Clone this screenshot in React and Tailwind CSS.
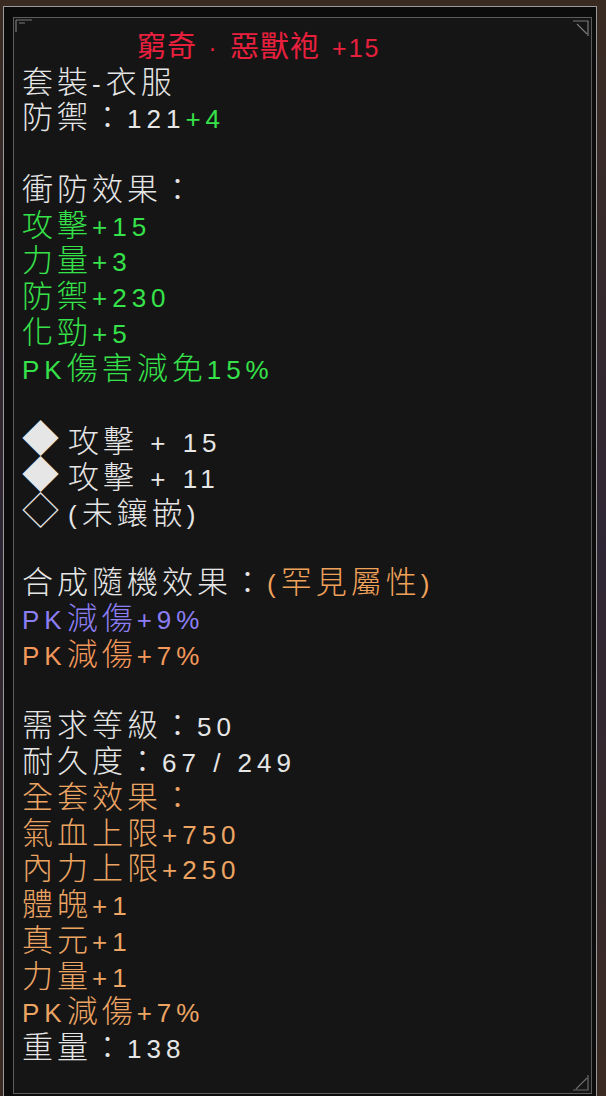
import React from "react";

const WHITE = "text-[#e6e6e6]";
const GREEN = "text-[#36e24a]";
const ORANGE = "text-[#eca463]";
const ORANGE2 = "text-[#f3975a]";
const PURPLE = "text-[#8c7ef4]";

const BODY_LATIN = "font-['Liberation_Sans',sans-serif] text-[26px] tracking-[5px]";
const TITLE_LATIN = "font-['Liberation_Sans',sans-serif] text-[25px] tracking-[2px]";

// ASCII runs get a smaller latin font, CJK stays in Noto
function Txt({ text, latin = BODY_LATIN }) {
  const parts = text.split(/([\u0000-\u00ff]+)/).filter(Boolean);
  return parts.map((p, i) =>
    /^[\u0000-\u00ff]+$/.test(p) ? (
      <span key={i} className={latin}>
        {p}
      </span>
    ) : (
      <span key={i}>{p}</span>
    )
  );
}

function Line({ children, className = WHITE }) {
  return (
    <div className={`h-[35.78px] leading-[35.78px] whitespace-nowrap ${className}`}>
      {children}
    </div>
  );
}

function Blank() {
  return <div className="h-[35.78px]" />;
}

function Gem({ filled, text }) {
  return (
    <Line>
      <span className="inline-block w-[46px] text-[37px] leading-[35.78px]">{filled ? "◆" : "◇"}</span>
      <Txt text={text} />
    </Line>
  );
}

export default function App() {
  return (
    <div className="w-[606px] h-[1096px] flex pt-[6px] pl-[3px] pr-[9px] bg-gradient-to-b from-[#3a2b22] via-[#2e2634] to-[#3b2a22]">
      <div className="flex-1 flex border border-b-0 border-[#9a9a9a] bg-[#0c0c0c] pl-[9px] pt-[10px] pr-[4px] pb-[2px]">
        <div className="relative flex-1 border border-[#5c5c5c] bg-[#151515] pl-[8px] font-['Noto_Sans_CJK_TC',sans-serif] font-light text-[31px] tracking-[4px]">
          {/* corner ornaments */}
          <svg className="absolute left-[1px] top-[1px]" width="18" height="14" viewBox="0 0 18 14">
            <path d="M1 1 H17 M1 1 V13 M4 4 H10" stroke="#7a7a7a" strokeWidth="1.2" fill="none" />
          </svg>
          <svg className="absolute right-[1px] top-[1px]" width="18" height="18" viewBox="0 0 18 18">
            <path d="M1 2 H16 V17 M5 5 L15 15" stroke="#7a7a7a" strokeWidth="1.2" fill="none" />
          </svg>
          <svg className="absolute right-[1px] bottom-[1px]" width="18" height="18" viewBox="0 0 18 18">
            <path d="M16 1 V16 H1 M15 4 L4 15" stroke="#6a6a6a" strokeWidth="1.2" fill="none" />
          </svg>

          <div className="mt-[10px] h-[33.5px] leading-[33.5px] pl-[115px] text-[29px] tracking-[1px] text-[#e8203e] font-normal whitespace-nowrap">
            <span>窮奇</span>
            <span className={`inline-block w-[33px] text-center ${TITLE_LATIN}`}>·</span>
            <span>惡獸袍</span>
            <span className={`ml-[12px] ${TITLE_LATIN}`}>+15</span>
          </div>

          <Line><Txt text="套裝-衣服" /></Line>
          <Line>
            <Txt text="防禦：121" />
            <span className={GREEN}><Txt text="+4" /></span>
          </Line>
          <Blank />
          <Line><Txt text="衝防效果：" /></Line>
          <Line className={GREEN}><Txt text="攻擊+15" /></Line>
          <Line className={GREEN}><Txt text="力量+3" /></Line>
          <Line className={GREEN}><Txt text="防禦+230" /></Line>
          <Line className={GREEN}><Txt text="化勁+5" /></Line>
          <Line className={GREEN}><Txt text="PK傷害減免15%" /></Line>
          <Blank />
          <Gem filled text="攻擊 + 15" />
          <Gem filled text="攻擊 + 11" />
          <Gem text="(未鑲嵌)" />
          <Blank />
          <Line>
            <Txt text="合成隨機效果：" />
            <span className="text-[#f0a25a]"><Txt text="(罕見屬性)" /></span>
          </Line>
          <Line className={PURPLE}><Txt text="PK減傷+9%" /></Line>
          <Line className={ORANGE2}><Txt text="PK減傷+7%" /></Line>
          <Blank />
          <Line><Txt text="需求等級：50" /></Line>
          <Line><Txt text="耐久度：67 / 249" /></Line>
          <Line className={ORANGE}><Txt text="全套效果：" /></Line>
          <Line className={ORANGE}><Txt text="氣血上限+750" /></Line>
          <Line className={ORANGE}><Txt text="內力上限+250" /></Line>
          <Line className={ORANGE}><Txt text="體魄+1" /></Line>
          <Line className={ORANGE}><Txt text="真元+1" /></Line>
          <Line className={ORANGE}><Txt text="力量+1" /></Line>
          <Line className={ORANGE}><Txt text="PK減傷+7%" /></Line>
          <Line><Txt text="重量：138" /></Line>
        </div>
      </div>
    </div>
  );
}
